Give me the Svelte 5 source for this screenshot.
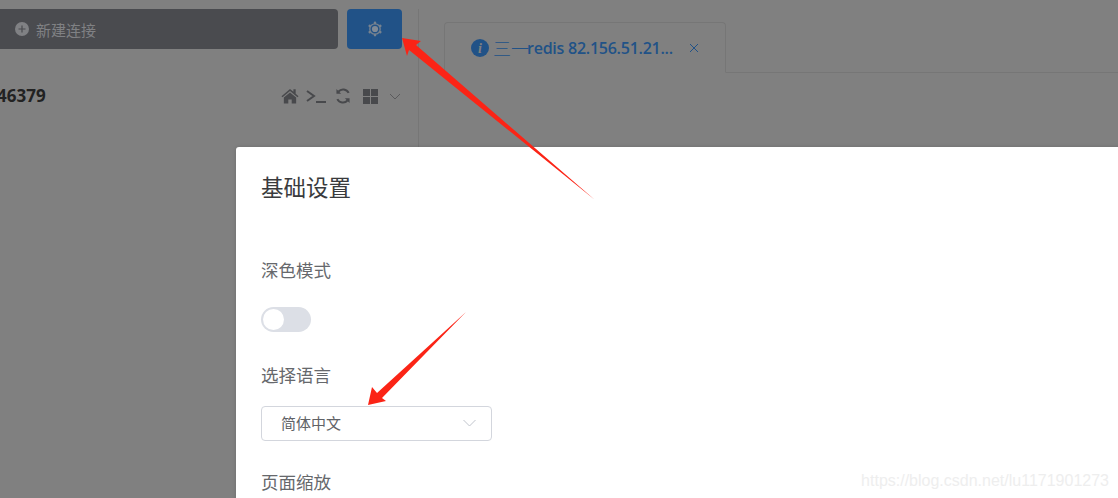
<script>
  let tabCjk = '三一';
  let tabTitle = 'redis 82.156.51.21...';
  // teeth of the settings gear
  const teeth = [0, 60, 120, 180, 240, 300];
</script>

<div class="page">
  <aside class="side">
    <div class="top">
      <button class="new-conn">
        <svg width="14" height="14" viewBox="0 0 14 14">
          <circle cx="7" cy="7" r="7" fill="#808184" />
          <path d="M7 3.5v7M3.5 7h7" stroke="#4a4b4f" stroke-width="1.2" />
        </svg>
        <span>新建连接</span>
      </button>
      <button class="settings">
        <svg width="16" height="16" viewBox="0 0 16 16" fill="none">
          <circle cx="8" cy="8" r="5.2" stroke="#76828f" stroke-width="1.3" />
          {#each teeth as deg}
            <circle cx="8" cy="1.9" r="1.3" fill="#76828f" transform="rotate({deg} 8 8)" />
          {/each}
          <circle cx="8" cy="8" r="3.1" fill="#808a96" />
        </svg>
      </button>
    </div>
    <div class="conn-row">
      <span class="conn-name">46379</span>
      <div class="tools">
        <svg class="home" width="18" height="16" viewBox="0 0 19 16">
          <path d="M9.5 0.5L0.5 8.2l1.1 1.2 7.9-6.7 7.9 6.7 1.1-1.2-3-2.6V1h-2.4v2.6z" fill="#48494c" />
          <path d="M3 9.6l6.5-5.4L16 9.6V16h-4.7v-4.4H7.7V16H3z" fill="#48494c" />
        </svg>
        <svg width="20" height="13" viewBox="0 0 20 13" fill="none" stroke="#48494c" stroke-width="2">
          <path d="M1 1l7 5-7 5" />
          <path d="M10 12h10" />
        </svg>
        <svg class="refresh" width="16" height="16" viewBox="0 0 17 17" fill="none" stroke="#48494c" stroke-width="2.2">
          <path d="M14.5 5.2A6.6 6.6 0 0 0 3.6 3.8" />
          <path d="M2.5 11.8a6.6 6.6 0 0 0 10.9 1.4" />
          <path d="M1.5 1v5h5z" fill="#48494c" stroke="none" />
          <path d="M15.5 16v-5h-5z" fill="#48494c" stroke="none" />
        </svg>
        <div class="grid-icon"><i></i><i></i><i></i><i></i></div>
        <svg class="chev" width="12" height="7" viewBox="0 0 12 7" fill="none" stroke="#5a5a5c" stroke-width="1">
          <path d="M1 1l5 5 5-5" />
        </svg>
      </div>
    </div>
  </aside>

  <main class="content">
    <div class="tabs">
      <div class="tab">
        <svg width="18" height="18" viewBox="0 0 18 18">
          <circle cx="9" cy="9" r="9" fill="#215287" />
          <text x="9" y="14" text-anchor="middle" class="info-i">i</text>
        </svg>
        <span class="tab-cjk">{tabCjk}</span>
        <span class="tab-title">{tabTitle}</span>
        <svg class="tab-close" width="10" height="10" viewBox="0 0 10 10" fill="none" stroke="#215287" stroke-width="1">
          <path d="M1 1l8 8M9 1l-8 8" />
        </svg>
      </div>
    </div>
  </main>

  <div class="modal-wrap">
    <section class="modal">
      <h2>基础设置</h2>
      <div class="field dark">
        <label for="dark-switch">深色模式</label>
        <div id="dark-switch" class="switch"><span></span></div>
      </div>
      <div class="field lang">
        <label for="lang-select">选择语言</label>
        <div id="lang-select" class="select">
          <span>简体中文</span>
          <svg width="13" height="8" viewBox="0 0 13 8" fill="none" stroke="#c0c4cc" stroke-width="1">
            <path d="M0.5 1l6 6 6-6" />
          </svg>
        </div>
      </div>
      <div class="field zoom">
        <label for="zoom-select">页面缩放</label>
      </div>
    </section>
  </div>

  <div class="watermark">https://blog.csdn.net/lu1171901273</div>

  <!-- red annotation arrows drawn over the screenshot -->
  <svg class="arrows" width="1118" height="498" viewBox="0 0 1118 498">
    <path d="M402 38L421 41 416 45 595 200 409 50 407 56z" fill="#fb2416" />
    <path d="M368 405L372 387 377 393 466 312 382 398 386 401z" fill="#fb2416" />
  </svg>
</div>

<style>
  :global(body) {
    margin: 0;
    background: #808080;
  }

  .page {
    position: relative;
    display: flex;
    height: 498px;
    width: 1118px;
    overflow: hidden;
    background: #808080;
    font-family: "Noto Sans CJK SC", "Open Sans", sans-serif;
  }

  .side {
    width: 419px;
    flex-shrink: 0;
    box-sizing: border-box;
    border-right: 1px solid #767676;
    margin-top: 9px;
  }

  .top {
    display: flex;
    gap: 9px;
    margin-left: -20px;
  }

  button {
    border: none;
    height: 40px;
    border-radius: 4px;
    padding: 0;
    font-family: inherit;
  }

  .new-conn {
    width: 358px;
    padding-left: 35px;
    background: #4a4b4f;
    color: #808184;
    font-size: 15px;
    display: flex;
    align-items: center;
    gap: 7px;
  }

  .settings {
    width: 55px;
    background: #215287;
    display: flex;
    align-items: center;
    justify-content: center;
  }

  .conn-row {
    display: flex;
    align-items: center;
    justify-content: space-between;
    margin-top: 35px;
    padding-right: 17px;
  }

  .conn-name {
    margin-left: -3px;
    font-family: "Open Sans", sans-serif;
    font-weight: 700;
    font-size: 17px;
    color: #222;
    line-height: 24px;
  }

  .tools {
    display: flex;
    align-items: center;
    gap: 8px;
  }

  .home {
    margin-right: -1px;
  }

  .refresh {
    margin-left: 1px;
  }

  .grid-icon {
    display: grid;
    grid-template-columns: 7px 7px;
    gap: 1px;
    margin-left: 4px;
  }

  .grid-icon i {
    display: block;
    height: 7px;
    background: #48494c;
  }

  .chev {
    margin-left: 3px;
  }

  .content {
    flex: 1;
    padding: 22px 0 0 25px;
  }

  .tabs {
    border-bottom: 1px solid #767676;
    height: 50px;
  }

  .tab {
    box-sizing: border-box;
    width: 282px;
    height: 51px;
    padding: 0 26px;
    display: flex;
    align-items: center;
    border: 1px solid #767676;
    border-bottom: 1px solid #808080;
    border-radius: 4px 4px 0 0;
    color: #215287;
    font-size: 16px;
    font-family: "Open Sans", "Noto Sans CJK SC", sans-serif;
    font-weight: 600;
    white-space: nowrap;
  }

  .tab svg:first-child {
    flex-shrink: 0;
    margin-right: 4px;
  }

  .tab-cjk {
    font-family: "Noto Sans CJK SC", sans-serif;
    font-weight: 300;
    font-size: 18px;
  }

  .tab-title {
    flex: 1;
    margin-left: -2px;
    letter-spacing: -0.25px;
  }

  .info-i {
    fill: #808080;
    font-family: "Liberation Serif", serif;
    font-style: italic;
    font-weight: 700;
    font-size: 14px;
  }

  .modal-wrap {
    position: absolute;
    top: 147px;
    left: 236px;
    right: -40px;
    bottom: -40px;
  }

  .modal {
    height: 100%;
    background: #fff;
    border-radius: 3px;
    box-shadow: 0 0 4px rgba(0, 0, 0, 0.15);
    padding: 24px 25px 0;
    box-sizing: border-box;
  }

  h2 {
    margin: 0;
    font-weight: 400;
    font-size: 22.5px;
    line-height: 30px;
    color: #3a3b3d;
  }

  label {
    display: block;
    font-size: 17.5px;
    line-height: 24px;
    color: #66686c;
  }

  .dark {
    margin-top: 57px;
  }

  .switch {
    margin-top: 25px;
    width: 50px;
    height: 25px;
    border-radius: 13px;
    background: #dcdfe6;
    position: relative;
  }

  .switch span {
    position: absolute;
    top: 2px;
    left: 2px;
    width: 21px;
    height: 21px;
    border-radius: 50%;
    background: #fff;
  }

  .lang {
    margin-top: 31px;
  }

  .select {
    margin-top: 19px;
    box-sizing: border-box;
    width: 231px;
    height: 35px;
    border: 1px solid #d3d6dd;
    border-radius: 4px;
    padding: 0 15px 2px 19px;
    display: flex;
    align-items: center;
    justify-content: space-between;
    font-size: 15px;
    color: #606266;
  }

  .zoom {
    margin-top: 29px;
  }

  .watermark {
    position: absolute;
    right: 9px;
    bottom: 8px;
    font-family: "Liberation Sans", sans-serif;
    font-size: 16px;
    color: #eeeeee;
  }

  .arrows {
    position: absolute;
    top: 0;
    left: 0;
    pointer-events: none;
  }
</style>
